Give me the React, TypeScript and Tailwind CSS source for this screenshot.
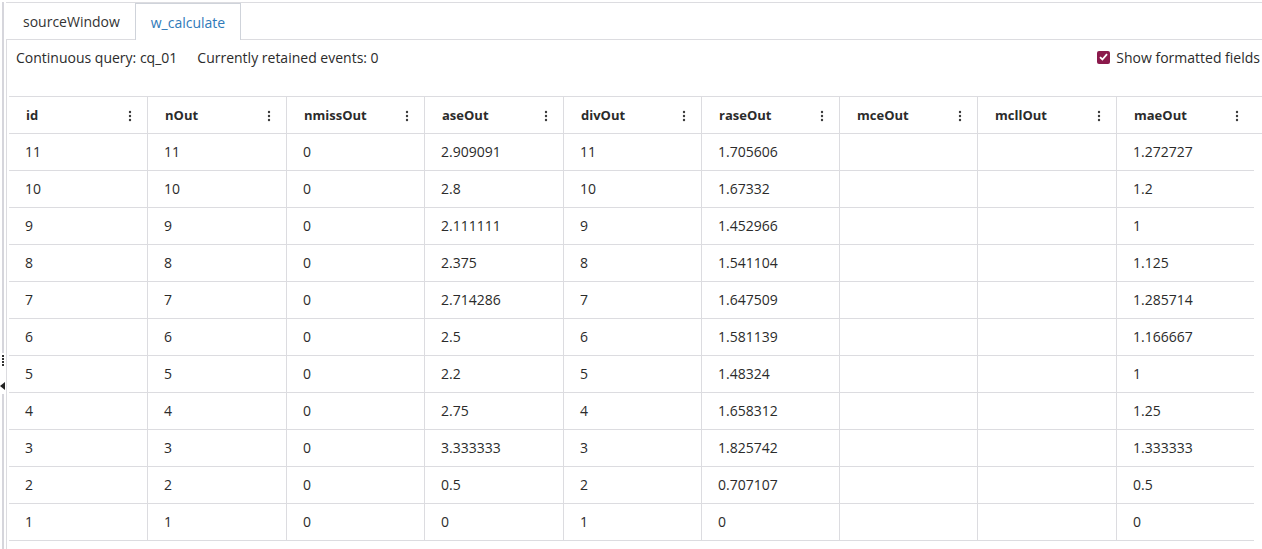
import React from 'react';

const COLS = ['id', 'nOut', 'nmissOut', 'aseOut', 'divOut', 'raseOut', 'mceOut', 'mcllOut', 'maeOut'];

const ROWS: string[][] = [
  ['11', '11', '0', '2.909091', '11', '1.705606', '', '', '1.272727'],
  ['10', '10', '0', '2.8', '10', '1.67332', '', '', '1.2'],
  ['9', '9', '0', '2.111111', '9', '1.452966', '', '', '1'],
  ['8', '8', '0', '2.375', '8', '1.541104', '', '', '1.125'],
  ['7', '7', '0', '2.714286', '7', '1.647509', '', '', '1.285714'],
  ['6', '6', '0', '2.5', '6', '1.581139', '', '', '1.166667'],
  ['5', '5', '0', '2.2', '5', '1.48324', '', '', '1'],
  ['4', '4', '0', '2.75', '4', '1.658312', '', '', '1.25'],
  ['3', '3', '0', '3.333333', '3', '1.825742', '', '', '1.333333'],
  ['2', '2', '0', '0.5', '2', '0.707107', '', '', '0.5'],
  ['1', '1', '0', '0', '1', '0', '', '', '0'],
];

const GRID = 'grid grid-cols-[139px_139px_138px_139px_138px_138px_138px_139px_137px]';

function Kebab() {
  return (
    <svg width="4" height="12" viewBox="0 0 4 12" className="shrink-0">
      <circle cx="2" cy="2" r="1.2" fill="#3a3a3a" />
      <circle cx="2" cy="6" r="1.2" fill="#3a3a3a" />
      <circle cx="2" cy="10" r="1.2" fill="#3a3a3a" />
    </svg>
  );
}

export default function App() {
  return (
    <div
      className="w-[1262px] h-[549px] overflow-hidden bg-white text-[14px] text-[#2b2b2b] flex"
      style={{ fontFamily: '"Open Sans", "Noto Sans", sans-serif' }}
    >
      {/* splitter rail */}
      <div className="w-[6px] shrink-0 flex flex-col items-start pt-[2px]">
        <div className="ml-[2px] w-[2px] h-[351px] bg-[#d6d6dc]" />
        <div className="ml-[2px] flex flex-col gap-[1px] py-[2px]">
          {[0, 1, 2, 3].map(i => (
            <div key={i} className="w-[2px] h-[2px] bg-[#333]" />
          ))}
        </div>
        <div className="h-[14px]" />
        <svg width="5" height="8" viewBox="0 0 5 8">
          <path d="M5 0 L0 4 L5 8 Z" fill="#222" />
        </svg>
        <div className="h-[4px]" />
        <div className="ml-[2px] w-[2px] flex-1 bg-[#d6d6dc]" />
      </div>

      <div className="flex-1 min-w-0 overflow-hidden flex flex-col border-t border-[#dcdce0] mt-[2px]">
        {/* tabs */}
        <div className="h-[37px] flex items-stretch">
          <div className="w-[129px] flex items-center pl-[17px] border-b border-[#dcdce0] text-[#333]">
            sourceWindow
          </div>
          <div className="w-[106px] flex items-center justify-center border-x border-t border-[#cfd3da] text-[#2f7ab9] bg-white">
            w_calculate
          </div>
          <div className="flex-1 border-b border-[#dcdce0]" />
        </div>

        {/* panel */}
        <div className="flex-1 min-w-0 flex flex-col border-l border-[#dcdce0]">
          <div className="h-[34px] flex items-center pl-[9px] pr-[2px]">
            <span>Continuous query: cq_01</span>
            <span className="ml-[20px]">Currently retained events: 0</span>
            <div className="ml-auto flex items-center gap-[6px]">
              <div className="w-[13px] h-[13px] rounded-[2px] bg-[#8b1a4c] flex items-center justify-center">
                <svg width="9" height="8" viewBox="0 0 9 8">
                  <path d="M1 4.2 L3.4 6.5 L8 1.2" stroke="#fff" strokeWidth="1.8" fill="none" />
                </svg>
              </div>
              <span>Show formatted fields</span>
            </div>
          </div>
          <div className="h-[22px]" />

          {/* table */}
          <div className="pl-[2px]">
            <div className={`${GRID} h-[38px] border-y border-[#dcdce0] w-[1260px] text-[13px]`}>
              {COLS.map((c, i) => (
                <div
                  key={c}
                  className={`flex items-center justify-between pl-[17px] pr-[15px] pt-[2px] font-bold ${i < COLS.length - 1 ? 'border-r border-[#dcdce0]' : ''}`}
                >
                  <span>{c}</span>
                  <Kebab />
                </div>
              ))}
            </div>
            {ROWS.map((r, ri) => (
              <div key={ri} className={`${GRID} h-[37px] border-b border-[#dcdce0] w-[1245px]`}>
                {r.map((v, ci) => (
                  <div
                    key={ci}
                    className={`flex items-center pl-[16px] pb-[2px] ${ci < r.length - 1 ? 'border-r border-[#dcdce0]' : ''}`}
                  >
                    {v}
                  </div>
                ))}
              </div>
            ))}
          </div>
        </div>
      </div>
    </div>
  );
}
